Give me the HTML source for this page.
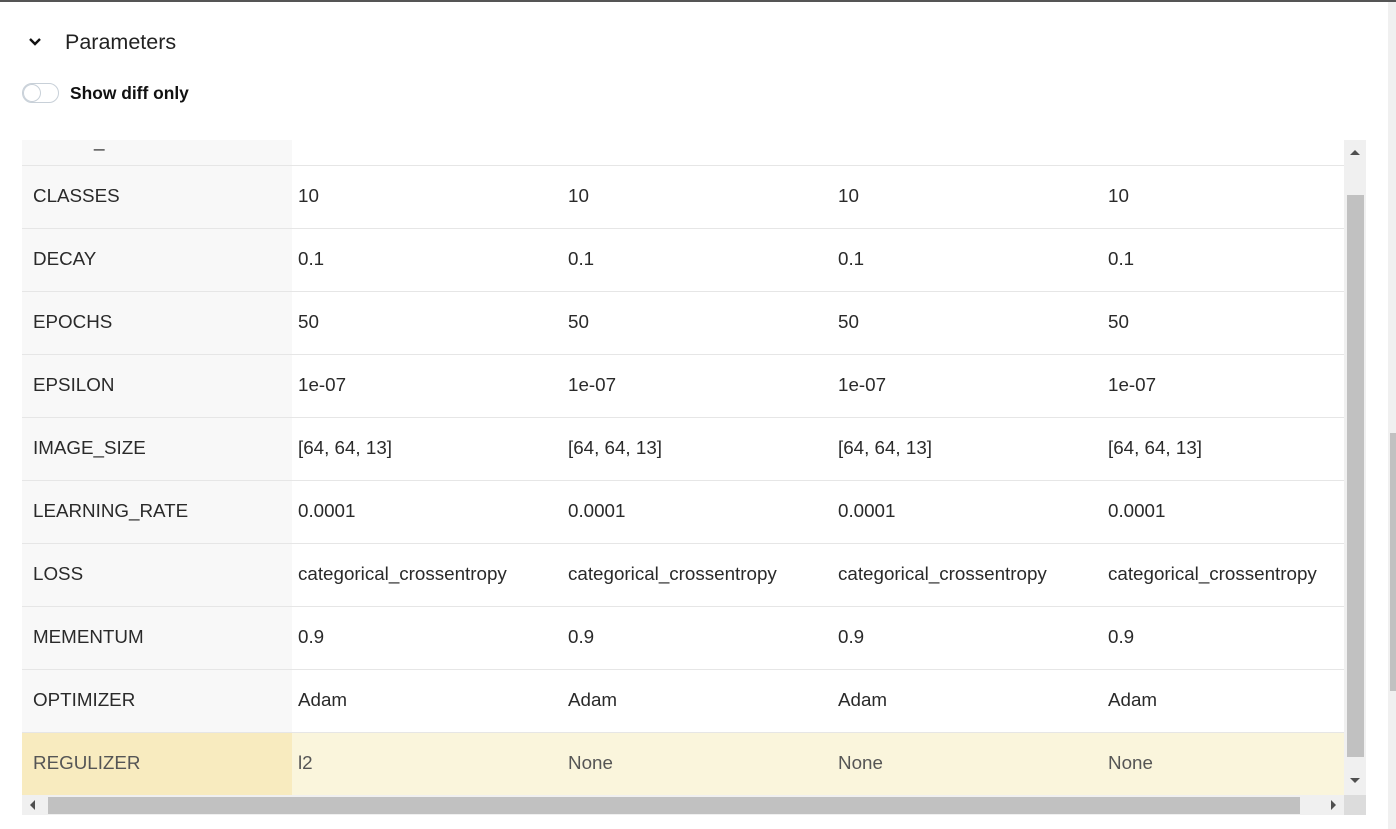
<!DOCTYPE html>
<html><head><style>
body{margin:0;width:1396px;height:829px;overflow:hidden;background:#fff;font-family:"Liberation Sans",sans-serif;position:relative;color:#222}
.top{position:absolute;left:0;top:0;width:1396px;height:2px;background:#555}
.osb{position:absolute;left:1388px;top:2px;width:8px;height:827px;background:#f0f0f0}
.osb div{position:absolute;left:2px;top:431px;width:6px;height:258px;background:#c1c1c1}
.h{position:absolute;left:65px;top:30px;font-size:21.5px;color:#222}
.chev{position:absolute;left:28px;top:37px}
.tog{position:absolute;left:22px;top:83px;width:37px;height:20px;border:1px solid #c8d0d8;border-radius:11px;box-sizing:border-box}
.tog div{position:absolute;left:0;top:0;width:18px;height:18px;border-radius:50%;border:1px solid #c8d0d8;box-sizing:border-box;background:#fff}
.sd{position:absolute;left:70px;top:83px;font-size:17.4px;font-weight:bold;color:#111}
.tbl{position:absolute;left:22px;top:140px;width:1344px;height:675px;overflow:hidden}
.row{position:absolute;left:0;width:1323px;height:62px;border-top:1px solid #e6e6e6;font-size:18.8px;color:#2a2a2a}
.row span{position:absolute;top:19px}
.k{position:absolute;left:0;top:0;width:270px;height:100%;background:#f8f8f8}
.k span{left:11px}
.hl{background:#faf5dc;color:#555}
.hl .k{background:#f8ebbf}
.vs{position:absolute;left:1322px;top:0;width:22px;height:655px;background:#f0f0f0}
.hs{position:absolute;left:0;top:655px;width:1344px;height:20px;background:#f0f0f0}
</style></head><body>
<div class="top"></div>
<div class="osb"><div></div></div>
<svg class="chev" width="14" height="10" viewBox="0 0 14 10"><path d="M2 2l5 5 5-5" stroke="#111" stroke-width="2.4" fill="none"/></svg>
<div class="h">Parameters</div>
<div class="tog"><div></div></div>
<div class="sd">Show diff only</div>
<div class="tbl">
<div class="row" style="top:-37px;border-top:none"><div class="k"></div><span style="left:72px;top:27px">_</span></div>
<div class="row" style="top:25px"><div class="k"><span>CLASSES</span></div><span style="left:276px">10</span><span style="left:546px">10</span><span style="left:816px">10</span><span style="left:1086px">10</span></div>
<div class="row" style="top:88px"><div class="k"><span>DECAY</span></div><span style="left:276px">0.1</span><span style="left:546px">0.1</span><span style="left:816px">0.1</span><span style="left:1086px">0.1</span></div>
<div class="row" style="top:151px"><div class="k"><span>EPOCHS</span></div><span style="left:276px">50</span><span style="left:546px">50</span><span style="left:816px">50</span><span style="left:1086px">50</span></div>
<div class="row" style="top:214px"><div class="k"><span>EPSILON</span></div><span style="left:276px">1e-07</span><span style="left:546px">1e-07</span><span style="left:816px">1e-07</span><span style="left:1086px">1e-07</span></div>
<div class="row" style="top:277px"><div class="k"><span>IMAGE_SIZE</span></div><span style="left:276px">[64, 64, 13]</span><span style="left:546px">[64, 64, 13]</span><span style="left:816px">[64, 64, 13]</span><span style="left:1086px">[64, 64, 13]</span></div>
<div class="row" style="top:340px"><div class="k"><span>LEARNING_RATE</span></div><span style="left:276px">0.0001</span><span style="left:546px">0.0001</span><span style="left:816px">0.0001</span><span style="left:1086px">0.0001</span></div>
<div class="row" style="top:403px"><div class="k"><span>LOSS</span></div><span style="left:276px">categorical_crossentropy</span><span style="left:546px">categorical_crossentropy</span><span style="left:816px">categorical_crossentropy</span><span style="left:1086px">categorical_crossentropy</span></div>
<div class="row" style="top:466px"><div class="k"><span>MEMENTUM</span></div><span style="left:276px">0.9</span><span style="left:546px">0.9</span><span style="left:816px">0.9</span><span style="left:1086px">0.9</span></div>
<div class="row" style="top:529px"><div class="k"><span>OPTIMIZER</span></div><span style="left:276px">Adam</span><span style="left:546px">Adam</span><span style="left:816px">Adam</span><span style="left:1086px">Adam</span></div>
<div class="row hl" style="top:592px"><div class="k"><span>REGULIZER</span></div><span style="left:276px">l2</span><span style="left:546px">None</span><span style="left:816px">None</span><span style="left:1086px">None</span></div>
<div class="vs"><svg width="22" height="655" style="position:absolute;left:0;top:0"><path d="M6 15l5-5 5 5z" fill="#505050"/><rect x="3" y="55" width="17" height="562" fill="#c1c1c1"/><path d="M6 638l5 5 5-5z" fill="#505050"/></svg></div>
<div class="hs"><svg width="1344" height="20" style="position:absolute;left:0;top:0"><path d="M13 5l-5 5 5 5z" fill="#505050"/><rect x="26" y="2" width="1252" height="17" fill="#c1c1c1"/><path d="M1309 5l5 5-5 5z" fill="#505050"/><rect x="1322" y="0" width="22" height="20" fill="#dcdcdc"/></svg></div>
</div>
</body></html>
